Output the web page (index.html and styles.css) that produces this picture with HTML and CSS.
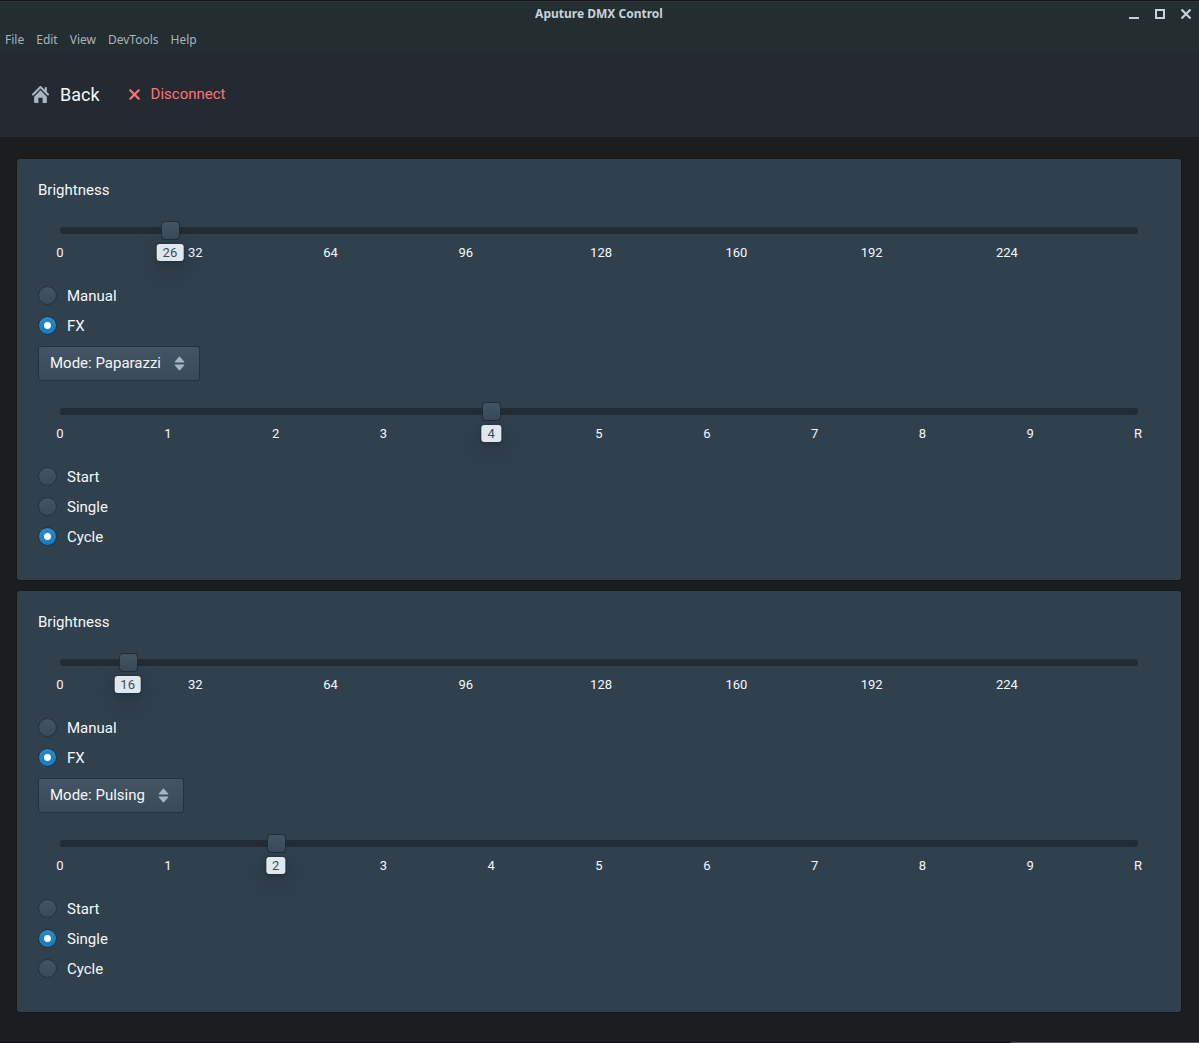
FILE: index.html
```html
<!DOCTYPE html>
<html lang="en">
<head>
<meta charset="utf-8">
<title>Aputure DMX Control</title>
<link rel="stylesheet" href="styles.css">
</head>
<body>
<header class="window-bar">
  <div class="title-row">
    <h1 class="title">Aputure DMX Control</h1>
    <div class="window-buttons">
      <button class="window-button" type="button" aria-label="Minimize"><svg width="12" height="12" viewBox="0 0 12 12"><path d="M1 10h10" stroke="currentColor" stroke-width="2"/></svg></button>
      <button class="window-button" type="button" aria-label="Maximize"><svg width="12" height="12" viewBox="0 0 12 12"><path d="M2 2h8v8H2z" fill="none" stroke="currentColor" stroke-width="2"/></svg></button>
      <button class="window-button" type="button" aria-label="Close"><svg width="12" height="12" viewBox="0 0 12 12"><path d="M1.5 1.5l9 9M10.500 1.500l-9 9" stroke="currentColor" stroke-width="2.200"/></svg></button>
    </div>
  </div>
  <nav class="menu" aria-label="Application">
    <button class="menu-item" type="button">File</button>
    <button class="menu-item" type="button">Edit</button>
    <button class="menu-item" type="button">View</button>
    <button class="menu-item" type="button">DevTools</button>
    <button class="menu-item" type="button">Help</button>
  </nav>
</header>

<nav class="navbar" aria-label="Device">
  <a class="back" href="#">
    <svg class="icon" width="17" height="17" viewBox="0 0 16 16"><path fill="currentColor" d="M2 10v5c0 .55.45 1 1 1h3v-5h4v5h3c.55 0 1-.45 1-1v-5L8 4l-6 6zm13.710-2.710L14 5.590V2c0-.55-.45-1-1-1s-1 .45-1 1v1.590L8.710.290C8.530.110 8.280 0 8 0s-.53.110-.71.290l-7 7a1.003 1.003 0 0 0 1.420 1.420L8 2.410l6.290 6.290c.18.190.43.300.710.300a1.003 1.003 0 0 0 .710-1.710z"/></svg>
    <span>Back</span>
  </a>
  <button class="disconnect" type="button">
    <svg class="icon" width="17" height="17" viewBox="0 0 16 16"><path fill="currentColor" d="M9.410 8l3.290-3.290c.19-.18.300-.43.300-.71a1.003 1.003 0 0 0-1.710-.71L8 6.590l-3.290-3.300a1.003 1.003 0 0 0-1.420 1.420L6.590 8 3.300 11.290c-.19.180-.3.430-.3.710a1.003 1.003 0 0 0 1.710.710L8 9.410l3.290 3.290c.18.190.43.300.710.300a1.003 1.003 0 0 0 .710-1.710L9.410 8z"/></svg>
    <span>Disconnect</span>
  </button>
</nav>

<main class="fixtures">
  <section class="card">
    <h2 class="heading">Brightness</h2>
    <div class="slider">
      <div class="track"><input class="range" type="range" min="0" max="255" value="26" aria-label="Brightness"></div>
      <div class="scale scale-dmx"><span class="tick">0</span><span class="tick">32</span><span class="tick">64</span><span class="tick">96</span><span class="tick">128</span><span class="tick">160</span><span class="tick">192</span><span class="tick">224</span></div>
      <output class="value" style="left: 10.196%">26</output>
    </div>
    <div class="options">
      <label class="option"><input class="radio" type="radio" name="control-1">Manual</label>
      <label class="option"><input class="radio" type="radio" name="control-1" checked>FX</label>
    </div>
    <div class="mode">
      <select class="mode-select" aria-label="Mode"><option selected>Mode: Paparazzi</option><option>Mode: Pulsing</option></select>
      <svg class="mode-arrows" width="17" height="17" viewBox="0 0 16 16"><path fill="currentColor" d="M4 7h8a.5.5 0 0 0 .370-.830l-4-4.500a.5.5 0 0 0-.740 0l-4 4.500A.5.5 0 0 0 4 7zm8 2H4a.5.5 0 0 0-.370.830l4 4.500a.5.5 0 0 0 .740 0l4-4.500A.5.5 0 0 0 12 9z"/></svg>
    </div>
    <div class="slider">
      <div class="track"><input class="range" type="range" min="0" max="10" value="4" aria-label="Speed"></div>
      <div class="scale"><span class="tick">0</span><span class="tick">1</span><span class="tick">2</span><span class="tick">3</span><span class="tick">4</span><span class="tick">5</span><span class="tick">6</span><span class="tick">7</span><span class="tick">8</span><span class="tick">9</span><span class="tick">R</span></div>
      <output class="value" style="left: 40%">4</output>
    </div>
    <div class="options">
      <label class="option"><input class="radio" type="radio" name="trigger-1">Start</label>
      <label class="option"><input class="radio" type="radio" name="trigger-1">Single</label>
      <label class="option"><input class="radio" type="radio" name="trigger-1" checked>Cycle</label>
    </div>
  </section>

  <section class="card">
    <h2 class="heading">Brightness</h2>
    <div class="slider">
      <div class="track"><input class="range" type="range" min="0" max="255" value="16" aria-label="Brightness"></div>
      <div class="scale scale-dmx"><span class="tick">0</span><span class="tick">32</span><span class="tick">64</span><span class="tick">96</span><span class="tick">128</span><span class="tick">160</span><span class="tick">192</span><span class="tick">224</span></div>
      <output class="value" style="left: 6.275%">16</output>
    </div>
    <div class="options">
      <label class="option"><input class="radio" type="radio" name="control-2">Manual</label>
      <label class="option"><input class="radio" type="radio" name="control-2" checked>FX</label>
    </div>
    <div class="mode">
      <select class="mode-select" aria-label="Mode"><option>Mode: Paparazzi</option><option selected>Mode: Pulsing</option></select>
      <svg class="mode-arrows" width="17" height="17" viewBox="0 0 16 16"><path fill="currentColor" d="M4 7h8a.5.5 0 0 0 .370-.830l-4-4.500a.5.5 0 0 0-.740 0l-4 4.500A.5.5 0 0 0 4 7zm8 2H4a.5.5 0 0 0-.370.830l4 4.500a.5.5 0 0 0 .740 0l4-4.500A.5.5 0 0 0 12 9z"/></svg>
    </div>
    <div class="slider">
      <div class="track"><input class="range" type="range" min="0" max="10" value="2" aria-label="Speed"></div>
      <div class="scale"><span class="tick">0</span><span class="tick">1</span><span class="tick">2</span><span class="tick">3</span><span class="tick">4</span><span class="tick">5</span><span class="tick">6</span><span class="tick">7</span><span class="tick">8</span><span class="tick">9</span><span class="tick">R</span></div>
      <output class="value" style="left: 20%">2</output>
    </div>
    <div class="options">
      <label class="option"><input class="radio" type="radio" name="trigger-2">Start</label>
      <label class="option"><input class="radio" type="radio" name="trigger-2" checked>Single</label>
      <label class="option"><input class="radio" type="radio" name="trigger-2">Cycle</label>
    </div>
  </section>
</main>
<footer class="window-edge"></footer>
</body>
</html>
```
FILE: styles.css
```css
* { box-sizing: border-box; }

body {
  margin: 0;
  min-height: 100vh;
  display: flex;
  flex-direction: column;
  background: #1c1d1e;
  color: #f5f8fa;
  font: 15px/20px Roboto, sans-serif;
}

button {
  padding: 0;
  border: 0;
  background: none;
  color: inherit;
  font: inherit;
}

/* Window frame */
.window-bar {
  border-top: 1px solid #15171a;
  background: #232d32;
  box-shadow: inset 0 1px #30373b;
  font: 12px/26px "Noto Sans", sans-serif;
}

.title-row {
  display: grid;
  grid-template-columns: 1fr auto 1fr;
  align-items: center;
  height: 26px;
  padding-right: 7px;
  padding-left: 6px;
  color: #c5d3d8;
}

.title {
  grid-column: 2;
  margin: 0;
  font-size: 12px;
  font-weight: 700;
}

.window-buttons {
  display: flex;
  justify-content: flex-end;
  gap: 14px;
}

.window-button { display: flex; }

.menu {
  display: flex;
  gap: 12px;
  height: 25px;
  padding-left: 5px;
  color: #a8b6bb;
}

/* Device navigation */
.navbar {
  display: flex;
  align-items: center;
  gap: 26px;
  height: 85px;
  padding-left: 32px;
  background: #242a31;
}

.back,
.disconnect {
  display: flex;
  align-items: center;
}

.back {
  gap: 11px;
  color: #f5f8fa;
  font-size: 18px;
  text-decoration: none;
}

.back .icon { color: #a7b6c2; }

.disconnect {
  gap: 8px;
  padding-bottom: 1px;
  color: #ff7373;
}

/* Fixture cards */
.fixtures {
  display: flex;
  flex: 1;
  flex-direction: column;
  gap: 11px;
  padding: 22px 18px 22px 17px;
}

.card {
  padding: 21px 21px 28px;
  border-radius: 3px;
  background: #30404d;
  box-shadow: 0 0 0 1px rgba(16, 22, 26, 0.4);
}

.heading {
  margin: 0;
  font-size: 15px;
  font-weight: 400;
}

.slider {
  position: relative;
  margin: 27px 22px 20px;
}

.track {
  height: 7px;
  border-radius: 3px;
  background: #222c34;
}

.range {
  display: block;
  width: calc(100% + 19px);
  height: 19px;
  margin: 0 -9px;
  appearance: none;
  background: none;
  transform: translateY(-6px);
}

.range::-webkit-slider-thumb {
  width: 19px;
  height: 19px;
  appearance: none;
  border: 1px solid #212c34;
  border-radius: 4px;
  background: linear-gradient(#435463, #394b59);
}

.scale {
  display: flex;
  justify-content: space-between;
  margin-top: 11px;
  font-size: 13px;
  line-height: 16px;
}

/* Last labelled step is 224 of 255 */
.scale-dmx { width: calc(100% * 224 / 255); }

.tick {
  display: flex;
  justify-content: center;
  width: 0;
}

.value {
  position: absolute;
  bottom: 0;
  padding: 0 6px;
  border-radius: 3px;
  background: #e1e8ed;
  box-shadow: 0 0 0 1px rgba(16, 22, 26, 0.1), 0 2px 4px rgba(16, 22, 26, 0.2), 0 8px 26px rgba(16, 22, 26, 0.3);
  color: #394b59;
  font-size: 13px;
  line-height: 17px;
  transform: translateX(-50%);
}

.option {
  display: flex;
  align-items: flex-start;
  gap: 10px;
  height: 30px;
  padding-top: 5px;
}

.radio {
  width: 19px;
  height: 19px;
  margin: 0;
  appearance: none;
  border: 1px solid #25323b;
  border-radius: 50%;
  background: linear-gradient(#435463, #394b59);
}

.radio:checked {
  background: radial-gradient(circle, #fff 3px, transparent 4px), linear-gradient(#2b8bcb, #137cbd);
  background-origin: border-box;
}

.mode {
  display: inline-grid;
  align-items: center;
  margin-top: 5px;
  vertical-align: top;
}

.mode-select {
  grid-area: 1 / 1;
  height: 35px;
  padding: 0 38px 2px 11px;
  appearance: none;
  field-sizing: content;
  border: 1px solid #25323b;
  border-radius: 3px;
  background: linear-gradient(#435463, #394b59);
  color: #f5f8fa;
  font: inherit;
}

.mode-arrows {
  grid-area: 1 / 1;
  justify-self: end;
  margin-right: 12px;
  color: #a7b6c2;
  pointer-events: none;
}

.window-edge {
  height: 1px;
  background: linear-gradient(90deg, #120d12 84.3%, #565356 84.3%);
}
```
